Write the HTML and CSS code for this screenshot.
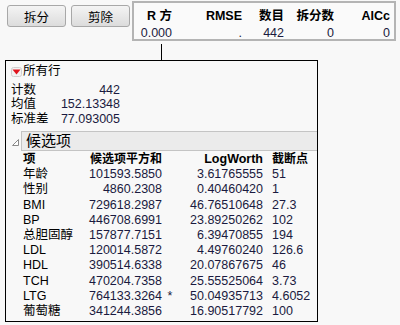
FILE: index.html
```html
<!DOCTYPE html>
<html lang="zh">
<head>
    <meta charset="UTF-8">
    <title>分区</title>
    <link rel="stylesheet" href="styles.css">
</head>
<body>
    <div class="top">
        <button class="btn">拆分</button>
        <button class="btn">剪除</button>
        <div class="stats">
            <div class="stat"><b>R 方</b><span>0.000</span></div>
            <div class="stat w70"><b>RMSE</b><span>.</span></div>
            <div class="stat w42"><b>数目</b><span>442</span></div>
            <div class="stat w50"><b>拆分数</b><span>0</span></div>
            <div class="stat w55"><b>AICc</b><span>0</span></div>
        </div>
    </div>
    <div class="link"></div>
    <div class="node">
        <div class="node-title">
            <svg class="red-tri" width="11" height="10" viewBox="0 0 11 10">
                <rect x="0.5" y="0.5" width="10" height="9" rx="2" fill="#f2f2f2" stroke="#d0d0d0"/>
                <path d="M1.5 2.5 L9.5 2.5 L5.5 7.5 Z" fill="#e0141e"/>
            </svg>
            所有行
        </div>
        <div class="summary">
            <span>计数</span><span class="num">442</span>
            <span>均值</span><span class="num">152.13348</span>
            <span>标准差</span><span class="num">77.093005</span>
        </div>
        <div class="section">
            <svg class="gray-tri" width="9" height="9" viewBox="0 0 9 9">
                <path d="M7.5 1.5 L7.5 7.5 L1.5 7.5 Z" fill="#fff" stroke="#8a8a8a"/>
            </svg>
            <div class="section-head">候选项</div>
        </div>
        <div class="cands">
            <b>项</b><b class="r cjk-head">候选项平方和</b><span></span><b class="r">LogWorth</b><b class="c4 cjk-head">截断点</b>

            <span>年龄</span><span class="r num">101593.5850</span><span></span><span class="r num">3.61765555</span><span class="c4 num">51</span>
            <span>性别</span><span class="r num">4860.2308</span><span></span><span class="r num">0.40460420</span><span class="c4 num">1</span>
            <span>BMI</span><span class="r num">729618.2987</span><span></span><span class="r num">46.76510648</span><span class="c4 num">27.3</span>
            <span>BP</span><span class="r num">446708.6991</span><span></span><span class="r num">23.89250262</span><span class="c4 num">102</span>
            <span>总胆固醇</span><span class="r num">157877.7151</span><span></span><span class="r num">6.39470855</span><span class="c4 num">194</span>
            <span>LDL</span><span class="r num">120014.5872</span><span></span><span class="r num">4.49760240</span><span class="c4 num">126.6</span>
            <span>HDL</span><span class="r num">390514.6338</span><span></span><span class="r num">20.07867675</span><span class="c4 num">46</span>
            <span>TCH</span><span class="r num">470204.7358</span><span></span><span class="r num">25.55525064</span><span class="c4 num">3.73</span>
            <span>LTG</span><span class="r num">764133.3264</span><span class="star">*</span><span class="r num">50.04935713</span><span class="c4 num">4.6052</span>
            <span>葡萄糖</span><span class="r num">341244.3856</span><span></span><span class="r num">16.90517792</span><span class="c4 num">100</span>
        </div>
    </div>
</body>
</html>
```

FILE: styles.css
```css
body {
    margin: 0;
    background: #f8f8f8;
    font-family: "Liberation Sans", "Noto Sans CJK SC", sans-serif;
    font-size: 12.5px;
    color: #000;
}
.top {
    display: flex;
    align-items: flex-start;
    padding: 1px 0 0 7px;
}
.btn {
    margin-top: 4px;
    margin-right: 5px;
    width: 59px;
    height: 22px;
    padding: 0;
    font: inherit;
    border: 1px solid #a8a8a8;
    border-radius: 3px;
    background: linear-gradient(#f4f4f4, #dcdcdc);
    color: #000;
}
.btn + .btn {
    margin-right: 2px;
}
.stats {
    display: flex;
    width: 260px;
    height: 36px;
    border: 2px solid #b4b4b4;
    background: #fafafa;
}
.stat {
    display: grid;
    grid-auto-rows: 17px;
    justify-items: end;
    align-items: center;
    width: 38px;
    padding-top: 4px;
    line-height: 14px;
}
.stat b {
    font-weight: bold;
}
.stat span {
    color: #1a1a40;
}
.w70 { width: 70px; }
.w42 { width: 42px; }
.w50 { width: 50px; }
.w55 { width: 56px; }
.link {
    width: 1px;
    height: 16px;
    margin: 3px 0 0 161px;
    background: #000;
}
.node {
    margin-left: 5px;
    width: 311px;
    height: 260px;
    border: 1px solid #000;
    overflow: hidden;
}
.node-title {
    display: flex;
    align-items: center;
    gap: 1px;
    padding: 3px 0 0 5px;
    height: 15px;
    line-height: 15px;
}
.summary {
    display: grid;
    grid-template-columns: 44px 65px;
    grid-auto-rows: 14.5px;
    align-items: center;
    padding: 4px 0 0 5px;
    line-height: 13px;
}
.summary .num {
    text-align: right;
}
.num {
    color: #1a1a40;
}
.section {
    display: flex;
    align-items: center;
    margin-top: 4px;
}
.gray-tri {
    margin: 4px 0 0 5px;
}
.section-head {
    margin-left: 1px;
    flex: 1;
    height: 18px;
    line-height: 18px;
    padding-left: 4px;
    font-size: 15px;
    background: #ebebeb;
    border: 1px solid #c4c4c4;
    border-right: none;
}
.cands {
    display: grid;
    grid-template-columns: 66px 73px 16px 85px auto;
    grid-auto-rows: 15.2px;
    align-items: center;
    padding: 1px 0 0 17px;
    line-height: 14px;
}
.cands b {
    font-weight: bold;
    color: #000;
    margin-bottom: 1px;
    white-space: nowrap;
}
.cands .cjk-head {
    font-size: 12px;
}
.r {
    text-align: right;
}
.c4 {
    padding-left: 9px;
}
.star {
    text-align: center;
    color: #1a1a40;
}
```
